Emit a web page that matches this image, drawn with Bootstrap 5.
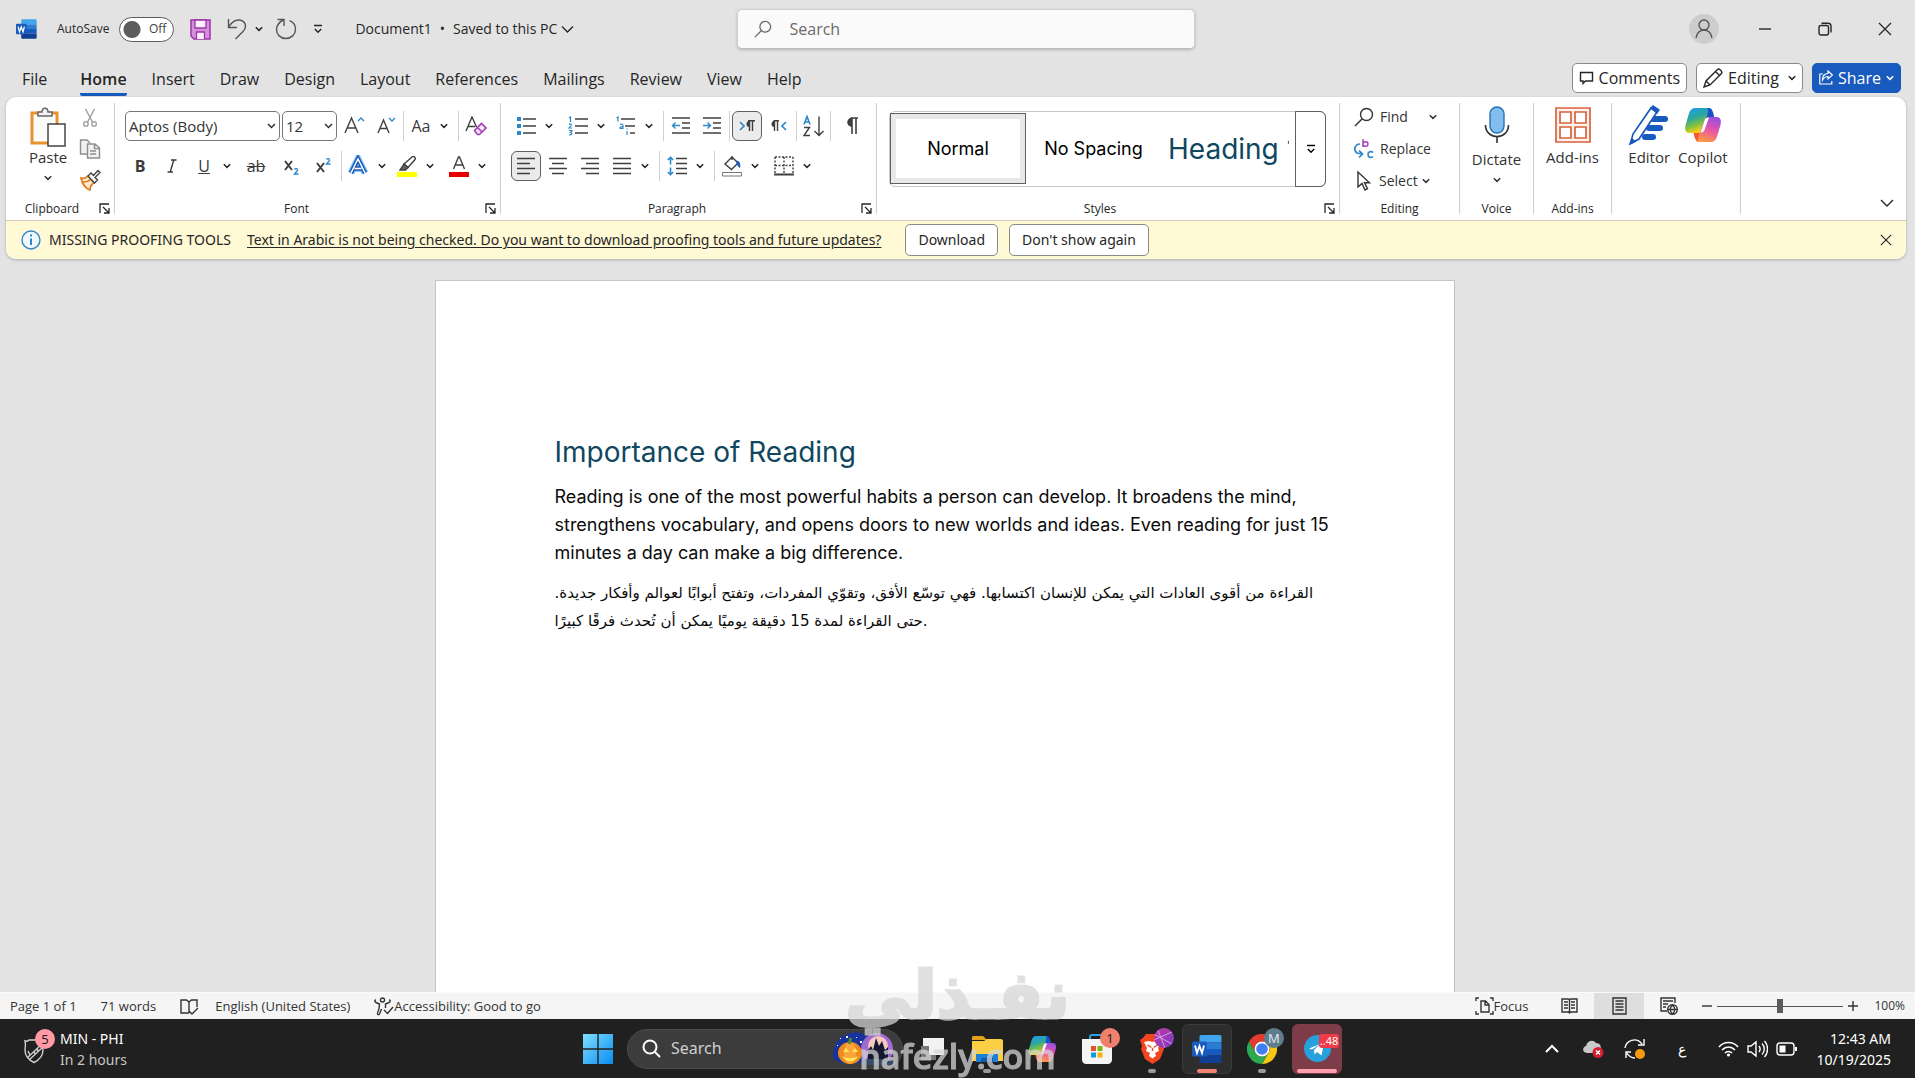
<!DOCTYPE html>
<html lang="en">
<head>
<meta charset="utf-8">
<meta name="viewport" content="width=device-width, initial-scale=1">
<title>Document1 - Word</title>
<link href="https://cdn.jsdelivr.net/npm/bootstrap@5.3.0/dist/css/bootstrap.min.css" rel="stylesheet">
<style>
  body { font-family: "Open Sans", sans-serif; font-size: 14px; line-height: 20px; color: #262626; background: #e3e3e3; height: 100vh; overflow: hidden; }
  svg { display: block; flex: none; fill: none; stroke: currentColor; stroke-width: 1.4; }
  button { color: inherit; }
  .plain { border: 0; background: none; padding: 0; display: flex; align-items: center; justify-content: center; }
  .solid { fill: currentColor; stroke: none; }

  /* title bar */
  .titlebar { height: 58px; }
  .titlebar-side { flex: 1 1 0; }
  .autosave-label { font-size: 12px; margin-left: 20px; }
  .autosave { appearance: none; width: 55px; height: 25px; border: 1px solid #5c5c5c; border-radius: 13px; background: #fff radial-gradient(circle at 12px 50%, #5c5c5c 8px, transparent 9px); margin: 0 0 0 10px; }
  .autosave-state { right: 8px; top: 3px; font-size: 12px; line-height: 18px; color: #444; pointer-events: none; }
  .searchbox { width: 458px; height: 40px; background: #fafafa; border: 1px solid #d0d0d0; border-bottom-color: #bdbdbd; border-radius: 5px; box-shadow: 0 1px 3px rgba(0,0,0,.22); }
  .searchbox input { border: 0; background: none; outline: 0; font-size: 16px; }
  .searchbox input::placeholder { color: #6b6b6b; opacity: 1; }
  .avatar { width: 30px; height: 30px; border-radius: 50%; background: #cdcdcd; color: #555; }
  .winbtn { width: 60px; height: 40px; }

  /* tabs */
  .tabrow { height: 39px; padding: 0 14px 0 10px; }
  .tabrow .tablink + .tablink { margin-left: 1px; }
  .tablink { color: #262626; text-decoration: none; font-size: 16px; line-height: 24px; padding: 0 12px; }
  .tablink span { display: block; padding: 7px 0 2px; border-bottom: 3px solid transparent; }
  .tablink.current span { font-weight: 600; border-color: #185abd; border-radius: 2px; }
  .tabbtn { height: 30px; border: 1px solid #8a8a8a; border-radius: 5px; background: #fff; font-size: 16px; gap: 5px; padding: 0 6px; }
  .tabbtn.share { background: #185abd; border-color: #185abd; color: #fff; }
  .tab-actions { gap: 9px; }

  /* ribbon */
  .ribbon-card { margin: 0 9px 0 6px; border-radius: 10px; overflow: hidden; background: #fff; box-shadow: 0 1px 3px rgba(0,0,0,.25); }
  .ribbon { height: 123px; }
  .rgroup { padding: 14px 9px 0 9px; display: flex; flex-direction: column; position: relative; }
  .rgroup .caption { margin-top: auto; text-align: center; font-size: 12px; line-height: 22px; }
  .launcher { position: absolute; right: 4px; bottom: 6px; }
  .gsep { width: 1px; background: #cfcfcf; margin: 6px 0; }
  .irow { display: flex; align-items: center; height: 30px; gap: 2px; }
  .irow + .irow { margin-top: 10px; }
  .ib { width: 30px; height: 30px; color: #3f3f3f; }
  .cr { width: 16px; height: 30px; }
  .isep { width: 1px; height: 30px; background: #d0d0d0; flex: none; }
  .ib.pressed { background: #ebebeb; border: 1px solid #5f5f5f; border-radius: 6px; }
  .glyph { font-size: 16px; line-height: 20px; color: #3b3b3b; }
  .boxsel { flex: none; height: 30px; border: 1px solid #767676; border-radius: 5px; font-size: 15px; padding: 0 18px 0 3px; color: #333; background-size: 9px 6px; background-position: right 3px center; background-image: url("data:image/svg+xml,%3Csvg xmlns='http://www.w3.org/2000/svg' viewBox='0 0 9 6'%3E%3Cpath d='M1 1l3.500 3.500L8 1' fill='none' stroke='%23333' stroke-width='1.500'/%3E%3C/svg%3E"); }
  .font-name { width: 155px; }
  .font-size { width: 55px; }
  .bigbtn { flex-direction: column; justify-content: flex-start; font-size: 15px; color: #333; }
  .paste-row { padding: 2px 0 0 14px; gap: 12px; }
  .w-clip { width: 108px; } .w-font { width: 385px; padding-left: 10px; padding-right: 8px; } .w-para { width: 375px; } .w-styles { width: 462px; }
  .w-edit { width: 119px; } .w-voice { width: 73px; } .w-add { width: 77px; } .w-copilot { width: 128px; }
  .para-in { padding-left: 10px; }
  .gallery { height: 76px; width: 437px; margin-left: 3px; border: 1px solid #c8c8c8; border-radius: 6px; font-family: Inter, "Liberation Sans", sans-serif; font-size: 18px; color: #000; }
  .gal-normal { width: 136px; height: 71px; margin: 1px 0 0; border: 1px solid #5f5f5f; box-shadow: inset 0 0 0 5px #e8e8e8; }
  .gal-item { width: 135px; }
  .gal-head { width: 128px; font-size: 28px; color: #0f4761; overflow: hidden; white-space: nowrap; justify-content: flex-start; padding-left: 7px; }
  .gal-more { width: 31px; margin: -1px -1px -1px auto; border: 1px solid #5f5f5f; border-radius: 0 6px 6px 0; }
  .edit-line { height: 32px; gap: 5px; justify-content: flex-start; font-size: 14px; color: #333; }

  /* message bar */
  .msgbar { height: 39px; background: #fff9d5; border-top: 1px solid #cfcdb8; color: #262626; padding: 0 14px 0 15px; font-family: "Noto Sans", "Open Sans", sans-serif; }
  .msgbar a { color: #262626; margin-left: 16px; text-underline-offset: 2px; }
  .msgbtn { height: 32px; border: 1px solid #8a8a8a; border-radius: 5px; background: #fff; padding: 0 12px; font-size: 14px; }
  .msgbtn + .msgbtn { margin-left: 11px; }

  /* document */
  .workspace { padding: 21px 26px 0 0; min-height: 0; overflow: hidden; }
  .sheet { width: 1020px; background: #fff; border: 1px solid #c4c4c4; border-bottom: 0; padding: 153px 118px 0 119px; color: #0b0b0b; font-family: Inter, "Liberation Sans", sans-serif; font-size: 18px; line-height: 28px; }
  .sheet h1 { font-size: 28px; line-height: 36px; font-weight: 400; color: #0f4761; margin: 0 0 13px; }
  .sheet p { margin: 0 0 12px; }
  .sheet .arabic { font-family: "DejaVu Sans", sans-serif; font-size: 15px; padding-right: 10px; }

  /* status bar */
  .statusbar { height: 27px; background: #f5f5f5; border-top: 1px solid #fbfbfb; font-size: 13px; color: #333; padding: 0 10px 0 10px; }
  .zoom-value { font-size: 12px; }
  .viewbtn { width: 50px; height: 26px; }
  .viewbtn.on { background: #dedede; }
  .zoom { appearance: none; width: 126px; height: 16px; background: linear-gradient(#555,#555) center/100% 1px no-repeat; margin: 0 5px; }
  .zoom::-webkit-slider-thumb { appearance: none; width: 6px; height: 14px; background: #5c5c5c; }

  /* task bar */
  .taskbar { height: 59px; background: #202020; color: #fff; line-height: 21px; font-family: "Noto Sans", "Open Sans", sans-serif; }
  .task-side { flex: 1 1 0; }
  .news-sub { color: #c6c6c6; }
  .tiles { gap: 5px; }
  .tile { width: 50px; height: 50px; border-radius: 6px; position: relative; }
  .tile.run::after { content: ""; position: absolute; bottom: 1px; left: 21px; width: 8px; height: 4px; border-radius: 2px; background: #9a9a9a; }
  .tile.active { background: #2d2d2d; border: 1px solid #3a3a3a; }
  .tile.active::after { left: 14px; bottom: 0; width: 20px; background: #ee8572; }
  .tile.alerting { background: #7d3c47; }
  .tile.alerting::after { left: 5px; width: 40px; background: #ff9fae; }
  .tbadge { position: absolute; border-radius: 10px; height: 20px; min-width: 20px; font-size: 13px; line-height: 20px; text-align: center; color: #222; }
  .badge-news { left: 11px; top: -5px; background: #ff99a4; }
  .badge-store { left: 28px; top: 4px; background: #f0806b; }
  .badge-brave { left: 27px; top: 4px; background: linear-gradient(135deg,#c13aa8,#7b3bc4); overflow: hidden; }
  .badge-chrome { left: 27px; top: 4px; background: #5f7d8c; color: #dfe8ec; }
  .badge-tg { left: 27px; top: 10px; height: 14px; border-radius: 3px; line-height: 14px; font-size: 11px; background: #f03a47; color: #fff; }
  .task-search { width: 276px; height: 40px; border-radius: 20px; background: #3c3c3c; border: 1px solid #4b4b4b; padding-left: 14px; }
  .task-search input { border: 0; background: none; outline: 0; font-size: 16px; color: #fff; min-width: 0; width: 140px; }
  .task-search input::placeholder { color: #d0d0d0; opacity: 1; }
  .stamp { position: fixed; left: 0; right: 0; bottom: 0; height: 120px; pointer-events: none; color: #d6d6d6; opacity: .74; text-align: center; overflow: hidden; }
  .stamp-ar { position: absolute; left: 0; right: 0; top: -2px; font: 700 66px/80px "DejaVu Sans", sans-serif; -webkit-text-stroke: 3px #d6d6d6; }
  .stamp-en { position: absolute; left: 0; right: 0; bottom: 2px; font: 600 34px/40px "Open Sans", sans-serif; -webkit-text-stroke: 1px #d6d6d6; }
</style>
<script src="https://cdn.jsdelivr.net/npm/bootstrap@5.3.0/dist/js/bootstrap.bundle.min.js"></script>
</head>
<body class="d-flex flex-column">

<svg width="0" height="0" class="position-absolute" aria-hidden="true">
  <defs>
    <symbol id="caret" viewBox="0 0 8 6"><path d="M.8 1.200 4 4.400 7.200 1.200" stroke-width="1.500"/></symbol>
    <symbol id="more" viewBox="0 0 10 10"><path d="M1 1.500h8M1.800 5 5 8.200 8.200 5"/></symbol>
    <symbol id="launch" viewBox="0 0 11 11"><path d="M1 10V1h9M4 4l5.500 5.500M10 5v5H5" stroke-width="1.300"/></symbol>
    <symbol id="cross" viewBox="0 0 14 14"><path d="m1 1 12 12M13 1 1 13" stroke-width="1.300"/></symbol>
    <linearGradient id="cpA" x1="0" y1="0" x2=".3" y2="1"><stop offset="0" stop-color="#1e9df0"/><stop offset=".45" stop-color="#2aa6a0"/><stop offset=".75" stop-color="#7fc241"/><stop offset="1" stop-color="#f5cf14"/></linearGradient>
    <linearGradient id="cpB" x1=".6" y1="0" x2=".3" y2="1"><stop offset="0" stop-color="#9a4fe0"/><stop offset=".5" stop-color="#e956a5"/><stop offset="1" stop-color="#ff9b3d"/></linearGradient>
    <linearGradient id="winG" x1="0" y1="0" x2="1" y2="1"><stop offset="0" stop-color="#7fe0ff"/><stop offset="1" stop-color="#0a8af0"/></linearGradient>
    <symbol id="copilot" viewBox="0 0 36 34">
      <g stroke="none">
        <path fill="#1b50c8" d="M19 0h5c3 0 4 2 5 6l1 4h-6c-3 0-4 2-5 5z"/>
        <path fill="url(#cpA)" d="M11 0h10c3 0 3 2 2.300 5L19 20c-1 4-3 5-6 5H5c-4 0-5-3-4-8L4 7c1.500-5 3-7 7-7z"/>
        <path fill="#f4592c" d="M9 25h5c3 0 4-2 5-5l-3 14h-1c-3 0-4-2-5-5z"/>
        <path fill="url(#cpB)" d="M25 9h7c4 0 5 3 4 8l-3 10c-1.500 5-3 7-7 7H15c-2 0-2-2-1.500-4L19 14c1-3 3-5 6-5z"/>
        <path fill="#fff" d="M20.500 11c1-1 2-1.500 4-1.500L20 22c-1 2-2 2.500-4 2.500z"/>
      </g>
    </symbol>
    <symbol id="word" viewBox="0 0 30 28">
      <g stroke="none">
        <path fill="#41a5ee" d="M9 0h19a1.500 1.500 0 0 1 1.500 1.500V7.500H7.500V1.500A1.500 1.500 0 0 1 9 0z"/>
        <path fill="#2b7cd3" d="M7.500 7.500h22v6.500h-22z"/><path fill="#185abd" d="M7.500 14h22v6.500h-22z"/>
        <path fill="#103f91" d="M7.500 20.500h22v6A1.500 1.500 0 0 1 28 28H9a1.500 1.500 0 0 1-1.500-1.500z"/>
        <rect y="6.500" width="15" height="15" rx="1.500" fill="#185abd"/>
      </g>
      <path d="m3 10.500 2 7.500 2.500-7 2.500 7 2-7.500" stroke="#fff" stroke-width="1.800"/>
    </symbol>
    <symbol id="lens" viewBox="0 0 20 20"><circle cx="12.500" cy="7.500" r="6"/><path d="M8 12 1 19"/></symbol>
  </defs>
</svg>

<!-- title bar -->
<header class="titlebar d-flex align-items-center">
  <div class="titlebar-side d-flex align-items-center ps-3">
    <svg width="21" height="20"><use href="#word"/></svg>
    <label class="autosave-label" for="autosave">AutoSave</label>
    <span class="position-relative d-flex"><input type="checkbox" role="switch" class="autosave" id="autosave"><span class="autosave-state position-absolute">Off</span></span>
    <button class="plain ms-3" aria-label="Save"><svg width="21" height="21" viewBox="0 0 21 21"><path d="M1 1h19v19H4l-3-3z" fill="#d58fdc" stroke="#9b35a8" stroke-width="1.500"/><path d="M5 1h11v8H5zM6.500 20v-7h8v7" fill="#fbeffc" stroke="#9b35a8" stroke-width="1.300"/></svg></button>
    <button class="plain ms-3" aria-label="Undo"><svg width="20" height="22" viewBox="0 0 20 22" color="#555"><path d="M1.500 1v8.500H10M1.500 9.500C4 5 7 2 11.500 2c7 0 9 7 4.500 11.500L8.500 21"/></svg></button>
    <button class="plain ms-1 ps-1" aria-label="Undo options"><svg width="8" height="6"><use href="#caret"/></svg></button>
    <button class="plain ms-1 ps-1" aria-label="Redo"><svg class="ms-1" width="22" height="22" viewBox="0 0 22 22" color="#555"><path d="M2.500 1.500H9V8M9 1.500C4 4 1.500 7 1.500 11.500c0 5 4 9 9.300 9s9.700-4 9.700-9c0-4-2.500-7.500-6-8.800"/></svg></button>
    <button class="plain ms-3" aria-label="Customize toolbar"><svg width="10" height="10"><use href="#more"/></svg></button>
    <span class="ms-4 ps-2">Document1</span><span class="mx-2">•</span><span>Saved to this PC</span>
    <button class="plain ms-1" aria-label="File info"><svg width="13" height="9" viewBox="0 0 13 9"><path d="m1 1.500 5.500 5.500L12 1.500"/></svg></button>
  </div>
  <div class="searchbox d-flex align-items-center ps-3 gap-3">
    <svg width="18" height="20" viewBox="0 0 20 20" color="#666"><use href="#lens"/></svg>
    <input type="search" placeholder="Search" aria-label="Search">
  </div>
  <div class="titlebar-side d-flex align-items-center justify-content-end">
    <button class="plain avatar me-3" aria-label="Account"><svg width="20" height="20" viewBox="0 0 20 20"><circle cx="10" cy="6" r="5"/><path d="M2 19c1-5 4-8 8-8s7 3 8 8"/></svg></button>
    <button class="plain winbtn" aria-label="Minimize"><svg width="12" height="2" viewBox="0 0 12 2"><path d="M0 1h12"/></svg></button>
    <button class="plain winbtn" aria-label="Restore"><svg width="14" height="14" viewBox="0 0 14 14"><rect x="1" y="3.500" width="9.500" height="9.500" rx="2"/><path d="M3.500 1.200H10A3 3 0 0 1 13 4v6.500"/></svg></button>
    <button class="plain winbtn" aria-label="Close"><svg width="14" height="14"><use href="#cross"/></svg></button>
  </div>
</header>

<!-- ribbon tabs -->
<nav class="tabrow d-flex align-items-center">
  <a class="tablink me-2" href="#"><span>File</span></a>
  <a class="tablink current" href="#"><span>Home</span></a>
  <a class="tablink" href="#"><span>Insert</span></a>
  <a class="tablink" href="#"><span>Draw</span></a>
  <a class="tablink" href="#"><span>Design</span></a>
  <a class="tablink" href="#"><span>Layout</span></a>
  <a class="tablink" href="#"><span>References</span></a>
  <a class="tablink" href="#"><span>Mailings</span></a>
  <a class="tablink" href="#"><span>Review</span></a>
  <a class="tablink" href="#"><span>View</span></a>
  <a class="tablink" href="#"><span>Help</span></a>
  <div class="d-flex ms-auto tab-actions">
    <button class="tabbtn d-flex align-items-center"><svg width="15" height="14" viewBox="0 0 14 14"><path d="M1 1.500h12v8.500H6L3.500 12.500V10H1z"/></svg>Comments</button>
    <button class="tabbtn d-flex align-items-center"><svg width="20" height="20" viewBox="0 0 20 20"><path d="M1 19 3 13 14.500 1.500c1.500-1.500 5.500 2 4 4L7 17zM12.500 3.500l4 4M3 13l4 4"/></svg>Editing<svg class="ms-1" width="8" height="6"><use href="#caret"/></svg></button>
    <button class="tabbtn share d-flex align-items-center"><svg width="14" height="15" viewBox="0 0 14 15"><path d="M4 4H.8v10h12v-3M9 1l4.500 4L9 9V6.500C6.500 6.500 5 7.500 3.500 10c0-4 2-6.500 5.500-6.500z" stroke-width="1.200"/></svg>Share<svg width="8" height="6"><use href="#caret"/></svg></button>
  </div>
</nav>

<!-- ribbon -->
<section class="ribbon-card">
<div class="ribbon d-flex">
  <div class="rgroup w-clip pt-2">
    <div class="d-flex paste-row">
      <button class="plain bigbtn">
        <svg width="36" height="40" viewBox="0 0 36 40"><path d="M2 6h25v30H2z" fill="#fff" stroke="#e8912d" stroke-width="3"/><path d="M6 10h17v22H6z" fill="#fafafa" stroke="none"/><path d="M8 9V5h4c0-5 6-5 6 0h4v4z" fill="#f2f2f2" stroke="#666" stroke-width="1.500"/><path d="M18 17h17v22H18z" fill="#fff" stroke="#444" stroke-width="1.500"/></svg>
        <span>Paste</span><svg class="mt-2" width="8" height="6"><use href="#caret"/></svg>
      </button>
      <div class="d-flex flex-column gap-2">
        <button class="plain" aria-label="Cut"><svg width="20" height="22" viewBox="0 0 22 24" color="#9a9a9a"><path d="M6 2l8 15M16 2 8 17"/><circle cx="6.500" cy="18.500" r="2.500"/><circle cx="15.500" cy="18.500" r="2.500"/></svg></button>
        <button class="plain" aria-label="Copy"><svg width="22" height="24" viewBox="0 0 22 24" color="#8e8e8e"><path d="M8 17H1.500V3H8l3 3" fill="#f1f1f1"/><path d="M8.500 7h7.500l4.500 4v10h-12zM15.500 7v4.500h5M11 14h6M11 17h6" fill="#f1f1f1"/></svg></button>
        <button class="plain" aria-label="Format Painter"><svg width="22" height="22" viewBox="0 0 22 22"><path d="M2 9c3 1 5 0 7-2l6 7c-2 1-4 4-4 7C7 20 3 15 2 9z" fill="#fce6cf" stroke="#e37b1c" stroke-width="1.700"/><path d="M4 13c3 0 6-1 7.500-2.500" stroke="#e37b1c"/><path d="M9 7l3-3 2.500 2.500L19 1.500l2 2L16 8.500l2.500 2.500-3 3z" fill="#fff" stroke="#444"/></svg></button>
      </div>
    </div>
    <div class="caption pe-3">Clipboard</div>
    <button class="plain launcher" aria-label="Clipboard options"><svg width="11" height="11"><use href="#launch"/></svg></button>
  </div>
  <div class="gsep"></div>

  <div class="rgroup w-font">
    <div class="irow">
      <select class="form-select boxsel font-name" aria-label="Font"><option>Aptos (Body)</option></select>
      <select class="form-select boxsel font-size" aria-label="Font size"><option>12</option></select>
      <button class="plain ib" aria-label="Grow font"><svg width="21" height="20" viewBox="0 0 21 20"><path d="M1 17 7.500 2 14 17M3.300 12h8.400"/><path d="m14 5 3-3 3 3" stroke="#2b88c9"/></svg></button>
      <button class="plain ib" aria-label="Shrink font"><svg width="20" height="20" viewBox="0 0 20 20"><path d="M2 17 7.500 4 13 17M4 12.500h7"/><path d="m13 2 3 3 3-3" stroke="#2b88c9"/></svg></button>
      <span class="isep"></span>
      <div class="d-flex"><button class="plain ib glyph">Aa</button><button class="plain cr" aria-label="Case options"><svg width="8" height="6"><use href="#caret"/></svg></button></div>
      <span class="isep ms-1"></span>
      <button class="plain ib" aria-label="Clear formatting"><svg width="22" height="20" viewBox="0 0 22 20"><path d="M1 15 7 1l4.500 10M3 10.500h7"/><path d="m9.500 14.500 7-7 4.500 4.500-6.500 6.500h-2zM12.500 11.500l4.500 4.500" stroke="#a33fb5" stroke-width="1.600" fill="#f6e4f8"/></svg></button>
    </div>
    <div class="irow">
      <button class="plain ib glyph fw-bold" aria-label="Bold">B</button>
      <button class="plain ib glyph" aria-label="Italic"><svg width="10" height="14" viewBox="0 0 10 14"><path d="M4 1h5.500M.5 13H6M6.800 1 3.200 13"/></svg></button>
      <div class="d-flex"><button class="plain ib glyph text-decoration-underline">U</button><button class="plain cr" aria-label="Underline options"><svg width="8" height="6"><use href="#caret"/></svg></button></div>
      <button class="plain ib glyph text-decoration-line-through ms-1">ab</button>
      <button class="plain ib ms-1" aria-label="Subscript"><svg width="16" height="18" viewBox="0 0 16 18"><path d="m1 4 7 9M8 4 1 13" stroke-width="2"/><path d="M10.500 12.500c1-1.500 3.500-1 3 1l-3 3.500h4" stroke="#2b88c9"/></svg></button>
      <button class="plain ib" aria-label="Superscript"><svg width="16" height="18" viewBox="0 0 16 18"><path d="m1 6 7 9M8 6 1 15" stroke-width="2"/><path d="M10.500 2.500c1-1.500 3.500-1 3 1l-3 3.500h4" stroke="#2b88c9"/></svg></button>
      <span class="isep"></span>
      <div class="d-flex"><button class="plain ib" aria-label="Text effects"><svg width="24" height="22" viewBox="0 0 24 22"><path d="M4 18 11 4l7 14M7.500 13.500h7" stroke="#8cc8f0" stroke-width="7"/><path d="M4 18 11 4l7 14M7.500 13.500h7" stroke="#185abd" stroke-width="4.500"/><path d="M4 18 11 4l7 14M7.500 13.500h7" stroke="#fff" stroke-width="1.500"/></svg></button><button class="plain cr" aria-label="Text effect options"><svg width="8" height="6"><use href="#caret"/></svg></button></div>
      <div class="d-flex"><button class="plain ib" aria-label="Highlight"><svg width="22" height="22" viewBox="0 0 22 22"><path d="M1 17h20v5H1z" fill="#ffff00" stroke="none"/><path d="m8 9 8-7c2-1.500 4 .5 3 2.500l-7 8z"/><path d="M8 9l4 3.500-2.500 2.500H4z" fill="#666"/></svg></button><button class="plain cr" aria-label="Highlight options"><svg width="8" height="6"><use href="#caret"/></svg></button></div>
      <div class="d-flex ms-1"><button class="plain ib" aria-label="Font color"><svg width="22" height="22" viewBox="0 0 22 22"><path d="M1 17h20v5H1z" fill="#e60000" stroke="none"/><path d="m5.500 14 5-12h1l5 12M7.500 10h7"/></svg></button><button class="plain cr" aria-label="Font color options"><svg width="8" height="6"><use href="#caret"/></svg></button></div>
    </div>
    <div class="caption pe-4">Font</div>
    <button class="plain launcher" aria-label="Font options"><svg width="11" height="11"><use href="#launch"/></svg></button>
  </div>
  <div class="gsep"></div>

  <div class="rgroup w-para para-in">
    <div class="irow">
      <div class="d-flex"><button class="plain ib" aria-label="Bullets"><svg width="20" height="20" viewBox="0 0 20 20"><path d="M7 3h13M7 10h13M7 17h13"/><path d="M1 1h4v4H1zM1 8h4v4H1zM1 15h4v4H1z" fill="#2b88c9" stroke="none"/></svg></button><button class="plain cr" aria-label="Bullet options"><svg width="8" height="6"><use href="#caret"/></svg></button></div>
      <div class="d-flex ms-1"><button class="plain ib" aria-label="Numbering"><svg width="20" height="20" viewBox="0 0 20 20"><path d="M7 3h13M7 10h13M7 17h13"/><path d="M1 2l1.500-1v5M1 8.500c1-1 3-.5 2 1L1 12h3M1 14.500h3L2.500 16.500c2 0 2 2.500-1.500 2.500" stroke="#2b88c9" stroke-width="1.200"/></svg></button><button class="plain cr" aria-label="Numbering options"><svg width="8" height="6"><use href="#caret"/></svg></button></div>
      <div class="d-flex"><button class="plain ib" aria-label="Multilevel list"><svg width="20" height="20" viewBox="0 0 20 20"><path d="M5 3h14M9 10h10M14 17h5"/><path d="M.5 2 2 1v4.500M4 8.500c2-1 3 0 3 1v3H4.500c-1 0-1-2 2.500-2M11 15v4M11 12.500v1" stroke="#2b88c9" stroke-width="1.200"/></svg></button><button class="plain cr" aria-label="Multilevel options"><svg width="8" height="6"><use href="#caret"/></svg></button></div>
      <span class="isep ms-1"></span>
      <button class="plain ib" aria-label="Decrease indent"><svg width="20" height="20" viewBox="0 0 20 20"><path d="M1 2h18M11 7h8M11 12h8M1 17h18"/><path d="M1.500 9.500H9M4.500 6.500l-3 3 3 3" stroke="#2b88c9"/></svg></button>
      <button class="plain ib" aria-label="Increase indent"><svg width="20" height="20" viewBox="0 0 20 20"><path d="M1 2h18M11 7h8M11 12h8M1 17h18"/><path d="M1 9.500h7.500M5.500 6.500l3 3-3 3" stroke="#2b88c9"/></svg></button>
      <span class="isep"></span>
      <button class="plain ib pressed" aria-label="Left to right"><svg width="16" height="12" viewBox="0 0 16 12"><path d="m1 2 4 4-4 4" stroke="#2b88c9" stroke-width="1.700"/><path d="M10.500 1v10M13.500 1v10M9 .8h7"/><path class="solid" d="M10.500 7a3 3 0 0 1 0-6z"/></svg></button>
      <button class="plain ib" aria-label="Right to left"><svg width="16" height="12" viewBox="0 0 16 12"><path d="m15 2-4 4 4 4" stroke="#2b88c9" stroke-width="1.700"/><path d="M3.500 1v10M6.500 1v10M2.500.8H8"/><path class="solid" d="M3.500 7a3 3 0 0 1 0-6z"/></svg></button>
      <span class="isep"></span>
      <button class="plain ib" aria-label="Sort"><svg width="22" height="22" viewBox="0 0 22 22"><path d="M2 9.500 5 1.500l3 8M3 7h4" stroke="#2b88c9" stroke-width="1.600"/><path d="M2 12.500h5.500L2 20.500h6M17 1.500v19M12.500 16l4.500 4.500 4.500-4.500"/></svg></button>
      <span class="isep"></span>
      <button class="plain ib ms-1" aria-label="Show marks"><svg width="14" height="18" viewBox="0 0 14 18"><path d="M7 1v16M11 1v16M6 1h7" stroke-width="1.600"/><path class="solid" d="M7 10a4.500 4.500 0 0 1 0-9.500z"/></svg></button>
    </div>
    <div class="irow">
      <button class="plain ib pressed" aria-label="Align left"><svg width="18" height="18" viewBox="0 0 18 18"><path d="M0 1.500h18M0 6.500h13M0 11.500h18M0 16.500h13"/></svg></button>
      <button class="plain ib" aria-label="Center"><svg width="18" height="18" viewBox="0 0 18 18"><path d="M0 1.500h18M3 6.500h12M0 11.500h18M3 16.500h12"/></svg></button>
      <button class="plain ib" aria-label="Align right"><svg width="18" height="18" viewBox="0 0 18 18"><path d="M0 1.500h18M5 6.500h13M0 11.500h18M5 16.500h13"/></svg></button>
      <div class="d-flex"><button class="plain ib" aria-label="Justify"><svg width="18" height="18" viewBox="0 0 18 18"><path d="M0 1.500h18M0 6.500h18M0 11.500h18M0 16.500h18"/></svg></button><button class="plain cr" aria-label="Justify options"><svg width="8" height="6"><use href="#caret"/></svg></button></div>
      <span class="isep ms-1"></span>
      <div class="d-flex"><button class="plain ib" aria-label="Line spacing"><svg width="20" height="20" viewBox="0 0 20 20"><path d="M9 2.500h11M9 7.500h11M9 12.500h11M9 17.500h11"/><path d="M3.500 8.500v-7M.8 4l2.700-2.700L6.200 4M3.500 11.500v7M.8 16l2.700 2.700L6.200 16" stroke="#2b88c9" stroke-width="1.600"/></svg></button><button class="plain cr" aria-label="Spacing options"><svg width="8" height="6"><use href="#caret"/></svg></button></div>
      <span class="isep ms-1"></span>
      <div class="d-flex"><button class="plain ib" aria-label="Shading"><svg width="22" height="22" viewBox="0 0 22 22"><path d="M1.500 17.500h19v3.500h-19z" stroke="#777" stroke-width="1"/><path d="m4 9 7-7 6 6-6.500 6.500zM11 5V1"/><path d="M15 6c3-1 5 2 4 7-2-1-3-3-4-7z" fill="#185abd" stroke="none"/></svg></button><button class="plain cr" aria-label="Shading options"><svg width="8" height="6"><use href="#caret"/></svg></button></div>
      <div class="d-flex ms-1"><button class="plain ib" aria-label="Borders"><svg width="20" height="20" viewBox="0 0 20 20"><path d="M1 1h18M1 1v16M19 1v16M10 1v16M1 9.500h18" stroke-dasharray="2 1.500"/><path d="M0 18.500h20" stroke-width="2"/></svg></button><button class="plain cr" aria-label="Border options"><svg width="8" height="6"><use href="#caret"/></svg></button></div>
    </div>
    <div class="caption pe-4">Paragraph</div>
    <button class="plain launcher" aria-label="Paragraph options"><svg width="11" height="11"><use href="#launch"/></svg></button>
  </div>
  <div class="gsep"></div>

  <div class="rgroup w-styles">
    <div class="gallery d-flex">
      <button class="plain gal-normal">Normal</button>
      <button class="plain gal-item">No Spacing</button>
      <button class="plain gal-head">Heading 1</button>
      <button class="plain gal-more" aria-label="More styles"><svg width="10" height="10"><use href="#more"/></svg></button>
    </div>
    <div class="caption pe-3">Styles</div>
    <button class="plain launcher" aria-label="Style options"><svg width="11" height="11"><use href="#launch"/></svg></button>
  </div>
  <div class="gsep"></div>

  <div class="rgroup w-edit pt-1">
    <button class="plain edit-line ms-1"><svg width="22" height="20" viewBox="0 0 20 20"><use href="#lens"/></svg>Find<svg class="ms-3" width="8" height="6"><use href="#caret"/></svg></button>
    <button class="plain edit-line ms-1"><svg width="22" height="22" viewBox="0 0 22 22"><path d="M10 1v8M10 6c0-3 5-3 5 0s-5 3-5 0" stroke="#a33fb5"/><path d="M20 14.500c-2-2-5-.5-5 2s3 4 5 2M7 6c-5 0-7 6-3 9l5 1M6 12.500 9.500 16 6 19.500" stroke="#2b88c9" stroke-width="1.700"/></svg>Replace</button>
    <button class="plain edit-line ms-1 gap-0"><svg width="22" height="22" viewBox="0 0 22 22"><path d="M5 2v15l4-3.500 3 6.500 2.500-1.200-3-6h5z"/></svg><span class="ms-1">Select</span><svg class="ms-1" width="8" height="6"><use href="#caret"/></svg></button>
    <div class="caption">Editing</div>
  </div>
  <div class="gsep"></div>

  <div class="rgroup w-voice px-0 pt-2">
    <button class="plain bigbtn"><svg width="26" height="44" viewBox="0 0 26 44"><rect x="6" y="2" width="14" height="26" rx="7" fill="#83bdeb" stroke="#2072b8"/><path d="M1.500 20c0 7 5 11.500 11.500 11.500S24.500 27 24.500 20M13 31.500V38" stroke-width="1.600"/></svg>Dictate<svg class="mt-2" width="8" height="6"><use href="#caret"/></svg></button>
    <div class="caption">Voice</div>
  </div>
  <div class="gsep"></div>

  <div class="rgroup w-add px-0 pt-2">
    <button class="plain bigbtn"><svg width="38" height="42" viewBox="0 0 38 42"><g stroke="#d9623b" stroke-width="1.700"><path d="M2 3h34v34H2z" fill="#fdf3ee"/><path d="M6 7h11v11H6zM21 7h11v11H21zM6 22h11v11H6zM21 22h11v11H21z" fill="#fff"/></g></svg>Add-ins</button>
    <div class="caption">Add-ins</div>
  </div>
  <div class="gsep"></div>

  <div class="rgroup w-copilot px-0 pt-2">
    <div class="d-flex justify-content-center gap-2 ps-1">
      <button class="plain bigbtn"><svg width="40" height="42" viewBox="0 0 40 42"><path d="M24 14h12M20 23h11M16 32h8" stroke="#185abd" stroke-width="6" stroke-linecap="round"/><path d="M1.500 38.500 4 29 22 3l6 4-18 27z" fill="#fff" stroke="#185abd" stroke-width="1.700"/><path d="m22 3 2-2 6 4-2 3zM1 39l2-5 3 2.500z" fill="#185abd" stroke="#185abd"/></svg>Editor</button>
      <button class="plain bigbtn"><svg width="37" height="42" viewBox="0 0 37 42"><use href="#copilot" y="3" width="37" height="34"/></svg>Copilot</button>
    </div>
  </div>
  <div class="gsep"></div>
  <button class="plain ms-auto align-self-end me-2 mb-2 p-1" aria-label="Collapse ribbon"><svg width="14" height="9" viewBox="0 0 14 9"><path d="m1 1 6 6 6-6"/></svg></button>
</div>

<!-- message bar -->
<div class="msgbar d-flex align-items-center">
  <svg width="20" height="20" viewBox="0 0 20 20" class="me-2"><circle cx="10" cy="10" r="9" stroke="#2b88c9" fill="#f1f8fd"/><path d="M10 8.500V15M10 4.500v2" stroke="#2b88c9" stroke-width="2"/></svg>
  <span>MISSING PROOFING TOOLS</span>
  <a href="#">Text in Arabic is not being checked. Do you want to download proofing tools and future updates?</a>
  <button class="msgbtn ms-4">Download</button>
  <button class="msgbtn">Don't show again</button>
  <button class="plain ms-auto" aria-label="Dismiss"><svg width="12" height="12" viewBox="0 0 14 14"><use href="#cross"/></svg></button>
</div>
</section>

<!-- document -->
<main class="workspace flex-fill d-flex justify-content-center">
  <article class="sheet">
    <h1>Importance of Reading</h1>
    <p>Reading is one of the most powerful habits a person can develop. It broadens the mind, strengthens vocabulary, and opens doors to new worlds and ideas. Even reading for just 15 minutes a day can make a big difference.</p>
    <p class="arabic" lang="ar" dir="ltr">القراءة من أقوى العادات التي يمكن للإنسان اكتسابها. فهي توسّع الأفق، وتقوّي المفردات، وتفتح أبوابًا لعوالم وأفكار جديدة. حتى القراءة لمدة 15 دقيقة يوميًا يمكن أن تُحدث فرقًا كبيرًا.</p>
  </article>
</main>

<!-- status bar -->
<footer class="statusbar d-flex align-items-center">
  <span>Page 1 of 1</span><span class="ms-4">71 words</span>
  <button class="plain ms-4" aria-label="Proofing"><svg width="19" height="17" viewBox="0 0 19 17"><path d="M9 15H1V2h5.500L9 4l2.500-2H17v7M9 4v11M9 13l3 3 6-6"/></svg></button>
  <span class="ms-3">English (United States)</span>
  <button class="plain ms-4"><svg width="20" height="19" viewBox="0 0 20 19"><circle cx="8.500" cy="3" r="2"/><path d="M2 3c-2 0-1 2 0 2.500L5.500 7c0 4-.5 6-2 9-.5 2 1.500 2 2 1l2-5M15 3c2 0 1 2 0 2.500L11.500 7v4M10 13l3.500 3.500L19 10"/></svg>Accessibility: Good to go</button>
  <div class="ms-auto d-flex align-items-center">
    <button class="plain me-3"><svg width="19" height="18" viewBox="0 0 19 18"><path d="M4 1H1v3M15 1h3v3M4 17H1v-3M15 17h3v-3M6 4h4.500L14 7.500V15H6zM10 4v4h4"/></svg>Focus</button>
    <button class="plain viewbtn" aria-label="Read mode"><svg width="17" height="16" viewBox="0 0 17 16"><path d="M1 1h6.500L8.500 2l1-1H16v13H9.500l-1 1-1-1H1zM8.500 2v13M3 4h4M3 7h4M3 10h4M10 4h4M10 7h4M10 10h4"/></svg></button>
    <button class="plain viewbtn on" aria-label="Print layout"><svg width="15" height="18" viewBox="0 0 15 18"><path d="M1 1h13v16H1zM3.500 4h8M3.500 7h8M3.500 10h8M3.500 13h8"/></svg></button>
    <button class="plain viewbtn" aria-label="Web layout"><svg width="18" height="18" viewBox="0 0 18 18"><path d="M7 14H1V1h14v5M3 4h10M3 7h5M3 10h3"/><circle cx="12.500" cy="12.500" r="4.800"/><path d="M8 12.500h9M12.500 8c-3 3-3 6 0 9M12.500 8c3 3 3 6 0 9"/></svg></button>
    <button class="plain ms-2" aria-label="Zoom out"><svg width="10" height="10" viewBox="0 0 10 10"><path d="M0 5h10"/></svg></button>
    <input type="range" class="zoom" min="10" max="190" value="100" aria-label="Zoom">
    <button class="plain" aria-label="Zoom in"><svg width="10" height="10" viewBox="0 0 10 10"><path d="M0 5h10M5 0v10"/></svg></button>
    <span class="ms-3 zoom-value">100%</span>
  </div>
</footer>

<!-- task bar -->
<footer class="taskbar d-flex align-items-center">
  <div class="task-side d-flex align-items-center ps-4">
    <span class="position-relative"><svg width="20" height="26" viewBox="0 0 20 26" color="#cfcfcf" class="mt-1"><path d="M1 3c2 1 3 0 4-1h10c1 1 2 2 4 1-1 4 0 6 0 9 0 6-4 10-9 12.500C5 22 1 18 1 12c0-3 1-5 0-9z"/><path d="M3 20 18 6M5 22 19 9M6 17l-2-4M10 13l1 3M13 10l1 4"/></svg><span class="tbadge badge-news">5</span></span>
    <div class="ms-3"><div>MIN - PHI</div><div class="news-sub">In 2 hours</div></div>
  </div>
  <div class="d-flex align-items-center">
    <button class="plain tile" aria-label="Start"><svg width="30" height="30" viewBox="0 0 30 30"><path d="M0 0h14.300v14.300H0zM15.700 0H30v14.300H15.700zM0 15.700h14.300V30H0zM15.700 15.700H30V30H15.700z" fill="url(#winG)" stroke="none"/></svg></button>
    <div class="task-search d-flex align-items-center overflow-hidden mx-1">
      <svg width="19" height="19" viewBox="0 0 19 19"><circle cx="8" cy="8" r="6.500" stroke-width="2"/><path d="m13 13 5 5" stroke-width="2"/></svg>
      <input type="search" class="ms-2" placeholder="Search" aria-label="Search Windows">
      <svg class="ms-auto me-1" width="66" height="34" viewBox="0 0 66 34"><g stroke="none"><path fill="#16349b" d="M1 26C0 14 8 2 20 1c6-1 10 0 14 2v28H8z"/><circle cx="45" cy="17" r="16" fill="#a06ad0"/><circle cx="46" cy="14" r="10" fill="#f5c9c0"/><path fill="#14182e" d="M36 30V18l3-4 2 4 3-12 3 8 3-5 3 9 3-3v15z"/><path fill="#394a66" d="M30 27h34v6H30z"/><path d="M8 6h1v1H8zM14 4h2v2h-2zM24 5h1v1h-1zM28 9h2v2h-2zM5 13h1v1H5z" fill="#fff"/><ellipse cx="18" cy="21" rx="12" ry="11" fill="#f08a1c"/><ellipse cx="18" cy="21" rx="6" ry="11" fill="#fba63a"/><path d="M17 6h3l-1 6h-3z" fill="#5b8a2a"/><path d="m11 20 3-4 3 4zM20 20l3-4 3 4zM10 24c5 3 11 3 16 0-2 7-13 7-16 0z" fill="#ffe65a"/></g></svg>
    </div>
    <div class="d-flex tiles">
    <button class="plain tile" aria-label="Task view"><svg width="23" height="22" viewBox="0 0 23 22"><path d="M0 8h15v14H0z" fill="#777" stroke="none"/><path d="M2 0h21v17H8V8H2z" fill="#f2f2f2" stroke="none"/></svg></button>
    <button class="plain tile run" aria-label="File Explorer"><svg width="31" height="28" viewBox="0 0 31 28"><g stroke="none"><path fill="#e0a21b" d="M0 3c0-2 1-2 2-2h9l4 4H0z"/><path fill="#fbcf45" d="M0 6h12l3-2h14c1 0 2 1 2 2v20H0z"/><path fill="#1c7fd6" d="M4 19h22v8H4z"/><path fill="#135da8" d="M9 23h12v4H9z"/></g></svg></button>
    <button class="plain tile" aria-label="Copilot"><svg width="28" height="26"><use href="#copilot"/></svg></button>
    <button class="plain tile" aria-label="Store"><svg width="30" height="30" viewBox="0 0 30 30"><path d="M8 6V3c0-1 1-2 2-2h10c1 0 2 1 2 2v3" stroke="#2aa3e0" stroke-width="2"/><path d="M0 5h30v21c0 2-2 4-4 4H4c-2 0-4-2-4-4z" fill="#f4f4f4" stroke="none"/><g stroke="none"><path fill="#e5512a" d="M9 12h5v5H9z"/><path fill="#7cb80c" d="M15.500 12h5v5h-5z"/><path fill="#0a9fe0" d="M9 18.500h5v5H9z"/><path fill="#f5b400" d="M15.500 18.500h5v5h-5z"/></g></svg><span class="tbadge badge-store">1</span></button>
    <button class="plain tile run" aria-label="Brave"><svg width="25" height="30" viewBox="0 0 25 30"><path d="M6 0h13l3 4 3 2-2 6 1 3-4 10-7.500 5L5 25 1 15l1-3-2-6 3-2z" fill="#f4461e" stroke="none"/><path d="M4 8l5-1 3.500 1L16 7l5 1-3 6 1 3-4 2 1 3-3.500 2.500L9 22l1-3-4-2 1-3z" fill="#fff" stroke="none"/><path d="m7.500 11 4 2.500M17.500 11l-4 2.500M12.500 14v3" stroke="#f4461e"/></svg><span class="tbadge badge-brave"><svg width="20" height="20" viewBox="0 0 20 20"><path d="M0 12 20 3M3 0l8 20M0 6l18 10" stroke="#e6b5ee" stroke-width=".8"/></svg></span></button>
    <button class="plain tile run active" aria-label="Word"><svg width="30" height="28"><use href="#word"/></svg></button>
    <button class="plain tile run" aria-label="Chrome"><svg width="30" height="30" viewBox="0 0 30 30"><g stroke="none"><path fill="#e33b2e" d="M2 7.500A15 15 0 0 1 28 7.500H15a7.500 7.500 0 0 0-6.500 11.200z"/><path fill="#f9c513" d="M28 7.500A15 15 0 0 1 15 30l6.500-11.200A7.500 7.500 0 0 0 15 7.500z"/><path fill="#2da94f" d="M15 30A15 15 0 0 1 2 7.500l6.500 11.200a7.500 7.500 0 0 0 13 0z"/><circle cx="15" cy="15" r="7.500" fill="#fff"/><circle cx="15" cy="15" r="5.800" fill="#3f7ff0"/></g></svg><span class="tbadge badge-chrome">M</span></button>
    <button class="plain tile run alerting" aria-label="Telegram"><svg width="27" height="27" viewBox="0 0 27 27"><circle cx="13.500" cy="13.500" r="13.500" fill="#27a0db" stroke="none"/><path d="m5 13.500 15-6-2.500 13-4.500-3.500-2.500 2.500-.5-4.500 6.500-6-8.500 5.500z" fill="#fff" stroke="none"/></svg><span class="tbadge badge-tg">..48</span></button>
    </div>
  </div>
  <div class="task-side d-flex align-items-center justify-content-end pe-4">
    <button class="plain me-4" aria-label="Hidden icons"><svg width="14" height="9" viewBox="0 0 14 9"><path d="m1 8 6-6 6 6" stroke-width="2"/></svg></button>
    <svg width="21" height="18" viewBox="0 0 21 18" class="me-3"><path d="M4 13c-5 0-5-6-1-7C4 1 10-1 13 3c4 0 5 3 5 6l-6 4z" fill="#c9c9c9" stroke="none"/><circle cx="15" cy="12.500" r="5.500" fill="#d11f2d" stroke="none"/><path d="m13 10.500 4 4m0-4-4 4" stroke="#fff"/></svg>
    <svg width="22" height="22" viewBox="0 0 22 22" class="me-4 ms-1"><path d="M1 10C2 3 12-2 18 6M20 1v6h-6M2 20v-6h5M2 14c3 5 6 6 9 6"/><circle cx="16" cy="16" r="5" fill="#f79a10" stroke="none"/></svg>
    <span class="mx-2" lang="ar">ع</span>
    <svg width="21" height="16" viewBox="0 0 21 16" class="ms-4"><path d="M1 6c5-6 14-6 19 0M4 9c4-4 9-4 13 0M7 12c2-2 5-2 7 0" stroke-width="1.700"/><circle cx="10.500" cy="14" r="1.600" fill="#fff" stroke="none"/></svg>
    <svg width="21" height="18" viewBox="0 0 21 18" class="ms-2"><path d="M1 6h3l5-4v14l-5-4H1zM12 6c1.500 2 1.500 4 0 6M15 3.500c3 3 3 8 0 11M17.500 1c4 4 4 12 0 16"/></svg>
    <svg width="21" height="14" viewBox="0 0 21 14" class="ms-2"><rect x="1" y="1" width="17" height="12" rx="3"/><path d="M3.500 3.500h6v7h-6zM19 5h2v4h-2z" fill="#fff" stroke="none"/></svg>
    <div class="text-end ms-3 ps-1"><div>12:43 AM</div><div>10/19/2025</div></div>
  </div>
</footer>

<div class="stamp"><div class="stamp-ar" lang="ar" dir="rtl">نفـذلي</div><div class="stamp-en">nafezly.com</div></div>
</body>
</html>
